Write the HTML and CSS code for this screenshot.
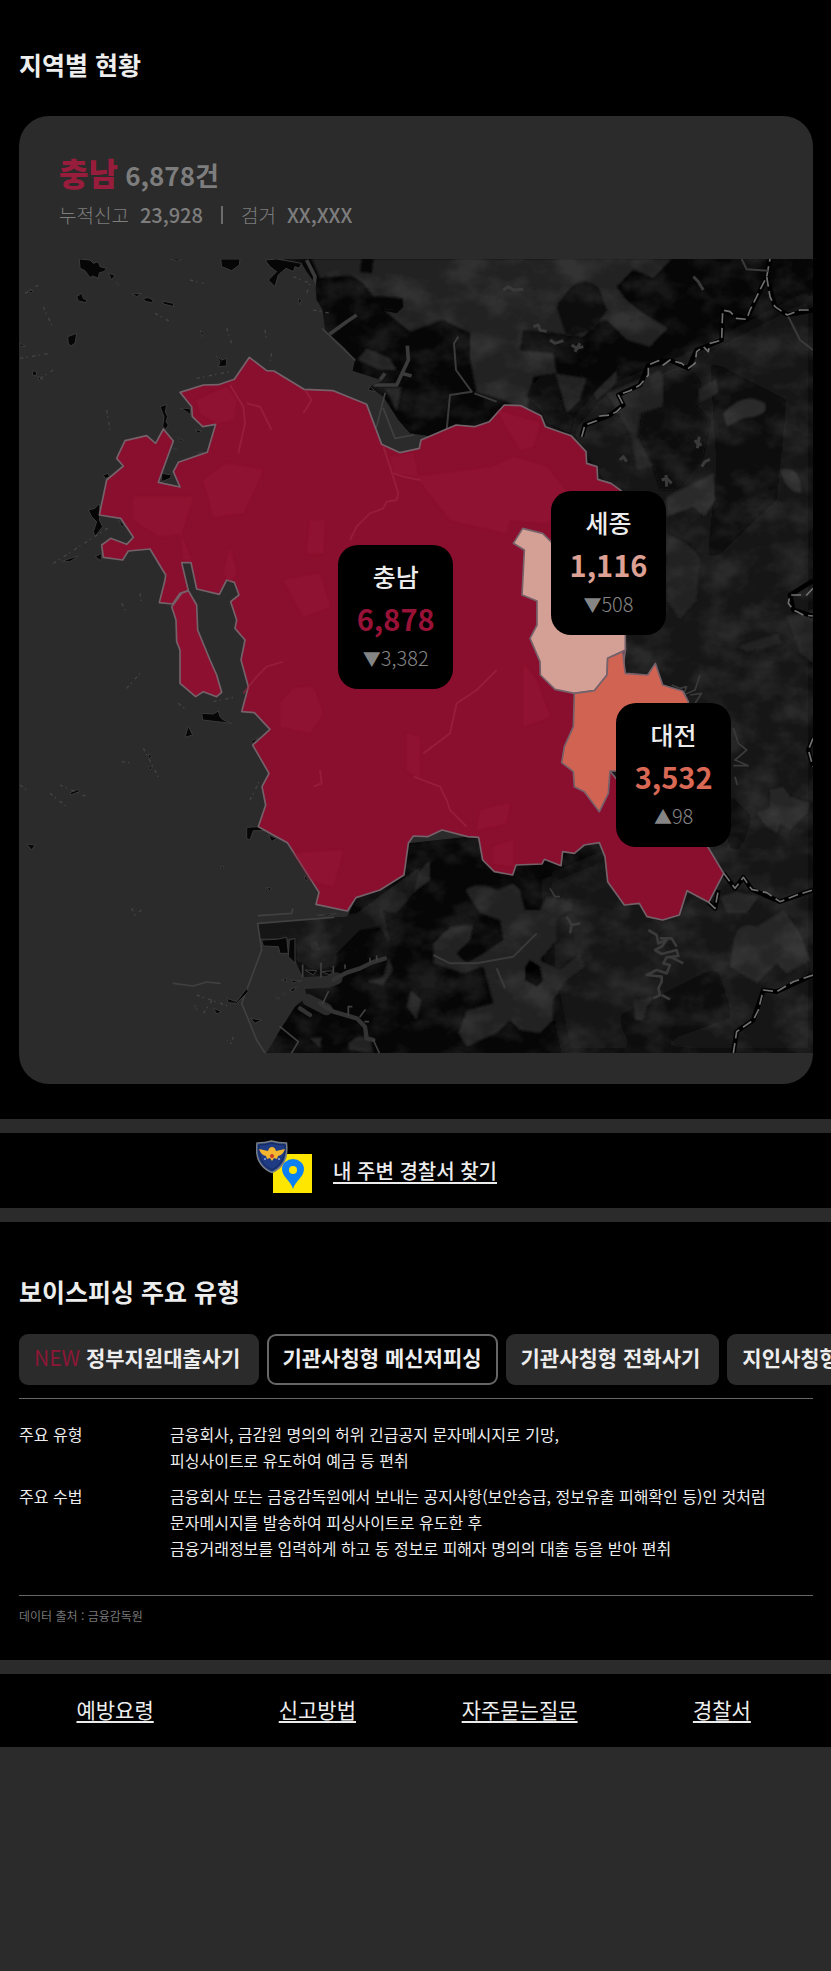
FILE: index.html
```html
<!DOCTYPE html>
<html lang="ko">
<head>
<meta charset="utf-8">
<meta name="viewport" content="width=device-width, initial-scale=1">
<title>지역별 현황</title>
<link rel="stylesheet" href="styles.css">
</head>
<body>
<main>
  <section class="region">
    <h2 class="heading">지역별 현황</h2>
    <article class="card">
      <header class="card-head">
        <p class="card-total"><strong class="card-name">충남</strong> 6,878건</p>
        <p class="card-sub"><span>누적신고</span><b>23,928</b><i class="bar"></i><span>검거</span><b>XX,XXX</b></p>
      </header>
      <div class="map">
        <svg class="map-art" viewBox="57 777 2382 2382" role="img" aria-label="충청권 지도">
          <defs>
            <filter id="soft" x="-10%" y="-10%" width="120%" height="120%"><feGaussianBlur stdDeviation="3"/></filter>
            <filter id="haze" x="-20%" y="-20%" width="140%" height="140%"><feGaussianBlur stdDeviation="22"/></filter>
            <filter id="grain" x="0" y="0" width="100%" height="100%">
              <feTurbulence type="fractalNoise" baseFrequency="0.009 0.012" numOctaves="4" seed="8"/>
              <feColorMatrix values="0 0 0 0 0.17  0 0 0 0 0.17  0 0 0 0 0.17  2.6 0 0 0 -1.05"/>
            </filter>
            <clipPath id="land">
              <path d="M795 777H850L880 800 905 790 920 815 945 850 950 900 968 930 975 990 1035 1045 1065 1080 1058 1112 1150 1142 1108 1160 1150 1190 1195 1260 1230 1300 1300 1310 1500 1300 1500 2500 1225 2530 1212 2625 1140 2670 1068 2693 1042 2750 980 2755 775 2770 780 2815 885 2815 885 2880 910 2935 920 2990 885 3020 840 3090 800 3159H2439V777Z"/>
            </clipPath>
          </defs>
          <g clip-path="url(#land)">
            <rect x="57" y="777" width="2382" height="2382" fill="#060606"/>
            <g filter="url(#haze)" fill="#171717">
              <path d="M1800 1180 2050 1080 2439 880V3159H1700L1650 2900 1640 2640 1830 2560 1840 1500 1700 1300Z"/>
              <path fill="#0b0b0b" d="M2130 1080 2360 1200 2330 1500 2120 1700 2150 1400ZM2150 2350 2260 2450 2200 2600ZM1850 3050 2150 2900 2200 3050 1900 3159Z"/>
            </g>
            <g filter="url(#soft)" fill="#202020">
              <path d="M935 777H1085L1080 815 1115 820 1120 777H2015L1960 835 1900 810 1850 860 1880 900 1930 940 2005 985 1950 1040 1880 1020 1820 960 1790 970 1750 1010 1670 1000 1570 990 1560 1050 1660 1060 1670 1120 1600 1130 1580 1230 1480 1190 1430 1180 1410 1080 1410 1000 1330 960 1230 995 1150 930 1200 930 1210 895 1150 890 1120 890 1090 850 1050 825 960 835Z"/>
              <path d="M1070 1080 1100 1045 1170 1075 1190 1110 1140 1110ZM1155 1165 1205 1160 1190 1235Z"/>
              <path fill="#0b0b0b" d="M1670 920Q1740 800 1800 870L1820 930 1780 990 1700 1010Z"/>
              <path d="M1665 1120 1760 1135 1740 1200 1700 1240ZM1820 1180 1980 1110 2000 1160 1985 1220 1920 1240 1910 1310 1960 1400 1910 1410 1890 1300ZM2090 1170 2150 1135 2155 1180 2100 1210ZM1780 1180 1850 1110 1850 1150 1790 1200Z"/>
              <path fill="#080808" d="M1990 1130Q2080 1090 2100 1150L2090 1220 2130 1260 2110 1370 2030 1470 1980 1470 1960 1400 1915 1300 1930 1240 1990 1220ZM1580 1190Q1600 1120 1665 1125L1690 1230 1720 1250 1710 1300 1640 1270 1620 1230Z"/>
              <path fill="#292929" d="M2170 1240Q2230 1170 2295 1210 2310 1250 2230 1255L2180 1280ZM2340 1410Q2400 1390 2405 1480 2360 1480 2340 1410ZM2000 1490 2140 1420 2145 1500 2115 1550 2080 1520 2000 1550Z"/>
              <path d="M2000 1600 2060 1630 2100 1670 2090 1800 2040 1860 2000 1800ZM2210 1940 2330 1900 2350 1930 2240 1955ZM2360 1850 2439 1830V1990L2400 1960Z"/>
              <path fill="#272727" d="M2270 2440 2310 2420 2310 2370 2350 2360 2370 2390 2430 2410 2420 2440 2370 2490 2340 2470 2330 2500 2300 2480ZM2160 2690 2210 2675 2275 2690 2240 2740 2180 2740ZM2200 2830Q2210 2760 2270 2780L2350 2730 2400 2800 2430 2880 2360 2920 2330 2890 2270 2950 2190 2900Z"/>
              <path d="M1395 2670Q1440 2640 1490 2670L1540 2650 1560 2670 1575 2730 1620 2730 1640 2690 1720 2700 1715 2730 1670 2750 1670 2820 1620 2880 1680 2910 1740 2860 1755 2900 1700 2940 1660 3000 1660 3060 1620 3100 1560 3090 1530 3060 1490 3100 1400 3140 1375 3100 1400 3030 1480 3010 1450 2900 1390 2920 1300 2890 1300 2830 1350 2780 1420 2775 1410 2820 1370 2860 1400 2890 1450 2860 1510 2820 1500 2760 1440 2740Z"/>
              <path fill="#060606" d="M1575 2900 1590 2880 1620 2900 1630 2940 1610 2960 1575 2940Z"/>
              <path d="M1900 3000 1965 2990 1940 3020 1930 3060 1905 3060ZM1233 2640 1290 2580 1290 2640 1240 2680ZM1233 2970 1265 3000 1250 3060 1220 3020Z"/>
              <path fill="#191919" d="M775 2770 1000 2750 1070 2740 1260 2600 1240 2680 1190 2740 1150 2730 1170 2830 1140 2780 1080 2790 1010 2860 1010 2900 940 2910 890 2880 885 2815 780 2815Z"/>
              <path d="M930 2830 950 2820 960 2850 935 2850ZM1100 2945 1150 2930 1165 2870 1180 2910 1150 2955ZM930 3115 965 3110 960 3145ZM1045 3130 1070 3110 1110 3110 1120 3159 1045 3150ZM1230 2980 1250 2980 1250 3050 1220 3020Z"/>
            </g>
            <rect x="57" y="777" width="2382" height="2382" filter="url(#grain)" opacity=".22"/>
            <g fill="none" stroke="#000" stroke-width="14" stroke-linejoin="round">
              <path d="M1745 1310 1755 1275 1830 1245 1870 1215 1855 1185 1920 1155 1945 1095 2010 1080 2065 1105 2090 1050 2165 1020 2168 930 2240 958 2300 830 2310 777M2300 830 2325 920 2362 945 2439 930M2439 1742 2370 1785 2380 1830 2439 1848M2171 2620 2205 2665 2230 2632 2255 2668 2340 2705 2439 2670M2126 2707 2145 2725 2155 2670M2439 2925 2330 2975 2290 2970 2260 3060 2210 3095 2200 3159M2439 2215 2425 2250 2439 2300"/>
            </g>
            <g fill="none" stroke="#707070" stroke-width="5" stroke-dasharray="30 14" stroke-linejoin="round">
              <path d="M1745 1310 1755 1275 1790 1262 1800 1248 1830 1245 1850 1235 1870 1215 1855 1185 1890 1172 1920 1155 1945 1125 1945 1095 1975 1082 1990 1095 2010 1080 2045 1090 2065 1105 2085 1090 2090 1055 2110 1040 2125 1055 2130 1030 2165 1020 2168 930 2190 935 2210 955 2240 958 2250 930 2300 830 2310 777M2300 830 2310 890 2325 920 2362 945 2400 930 2439 930M2439 1765 2420 1785 2370 1785 2365 1810 2380 1830 2410 1845 2439 1848M2171 2620 2205 2665 2230 2632 2255 2668 2300 2678 2340 2705 2390 2685 2439 2670M2126 2707 2145 2725 2155 2670M2439 2925 2380 2945 2330 2975 2290 2970 2275 3030 2260 3060 2210 3095 2200 3159M2439 2215 2425 2250 2439 2300"/>
            </g>
            <g fill="none" stroke="#3a3a3a" stroke-width="6" stroke-linejoin="round">
              <path stroke-width="11" d="M920 780 945 830 940 870M1070 945 1040 965 985 1005M1222 1037 1225 1080 1190 1155 1120 1155M1205 1120 1235 1128M1155 1120 1140 1140"/>
              <path d="M1375 1010 1362 1030 1368 1110 1415 1175 1350 1185 1340 1290M1423 1180 1490 1205M2365 950 2400 1020 2439 1050M2225 777 2240 808 2305 812"/>
              <path d="M1300 2865 1350 2890 1430 2890 1540 2870 1610 2800M1490 2905 1515 2965"/>
              <path stroke-width="8" d="M1945 2790 1970 2805 1975 2830 2000 2820 1985 2840 1965 2850 1985 2862 2030 2850 2035 2868 2000 2872 1990 2890 2010 2895 2000 2920 1970 2910 1940 2925 1985 2930 1985 2945 1975 2965 1980 2985 1960 2995M1985 2985 2010 2998M1980 2815 2015 2815 2030 2840M2010 2870 2050 2890M1700 2750 1715 2775 1740 2770M1715 2775 1710 2800"/>
              <path stroke-width="5" d="M2015 2055 2040 2065 2060 2060 2050 2085 2085 2070 2100 2025M2070 2085 2105 2080 2085 2110M2200 2185 2215 2230 2240 2250 2205 2280 2245 2297 2200 2297M2205 2330 2212 2355M1650 2665 1665 2690 1680 2690"/>
              <path stroke-width="9" d="M1510 870 1525 860 1540 870 1570 868M1600 980 1615 975 1620 990 1640 995M1650 1020 1665 1030 1690 1022M1715 1035 1730 1045 1750 1040M1725 1055 1740 1030M2080 830 2095 845 2110 870M2085 1320 2095 1335 2105 1332M2092 1345 2098 1310M1860 1380 1870 1370 1880 1385M2105 1400 2115 1385 2130 1378M1985 1440 2000 1435 2015 1450M1998 1425 2000 1460"/>
            </g>
            <path fill="#060606" d="M1140 930 1180 930 1205 895 1210 920 1190 940Z"/>
          </g>
          <!-- estuary, river channels and sea walls -->
          <g fill="none" stroke="#2b2b2b" stroke-linejoin="round" stroke-linecap="round">
            <path stroke-width="36" d="M905 2950 985 2945 1010 2935M925 3000 980 3028"/>
            <path stroke-width="13" stroke="#333" d="M1000 2940 1040 2918 1080 2905 1115 2888 1155 2875M960 3010 1000 3035 1070 3055 1095 3080 1100 3115 1120 3120M900 3025 930 3045"/>
            <path stroke="#404040" stroke-width="5" d="M775 2747 875 2740 878 2727M775 2770 1000 2752M773 2770 785 2850 725 3010 770 3120 795 3159M908 2930V2895M963 2930V2890M1000 2920V2900M1035 2905V2895M1110 2885V2875M1130 2880V2868M985 2975 968 3010M840 3080 895 3125 875 3159M1120 3120 1138 3159M1045 3045V3020H1055M1080 3050 1095 3030M1095 3065H1105M968 987 1065 1080M1155 1180 1130 1280M1150 1225 1185 1315 1240 1305M520 2950 580 2958 620 2946 660 2950"/>
          </g>
          <!-- islets -->
          <g fill="#060606" stroke="#3a3a3a" stroke-width="3">
            <path d="M238 777 270 780 280 790 295 785 300 800 320 805 312 815 298 818 295 835 278 828 270 833 255 812 240 805ZM325 820 345 825 335 840ZM350 845 357 855 350 855ZM230 890 245 880 250 895 260 900 258 908 235 903ZM395 882 425 880 410 890ZM430 895 445 893 460 900 455 908 435 904ZM488 903 520 910 522 920 490 912ZM203 1010 230 1000 225 1030 212 1038 205 1030ZM600 990 610 1000 607 1010ZM662 777H720L718 795 695 812 665 800ZM510 777H545L530 783ZM648 1068 665 1080 680 1075 680 1098 655 1100 660 1085ZM98 1112 110 1115 108 1128 98 1125ZM115 1130 130 1138 115 1140ZM60 1030 78 1040 60 1038ZM85 870 100 872 92 880Z"/>
            <path d="M480 1220 500 1213 496 1235 503 1250 498 1265 505 1275 498 1288 488 1280 492 1250ZM540 1225 570 1225 572 1245 560 1235ZM585 1290 605 1292 595 1300ZM535 1315 550 1320 542 1325ZM520 1345 530 1345 527 1350ZM485 1420 515 1425 510 1435 485 1445ZM310 1425 325 1420 328 1432 315 1435ZM265 1530 285 1525 298 1510 300 1545 298 1560 308 1580 285 1610 280 1595 290 1565 275 1550ZM355 1560 372 1575 365 1580ZM185 1685 210 1675 235 1668 210 1685ZM285 1670 305 1660 303 1682ZM575 1360 610 1357 580 1365Z"/>
            <path d="M605 2140 640 2142 655 2133 660 2150 670 2160 695 2170 650 2165 608 2160ZM565 2178 578 2205 555 2212ZM445 2262 455 2268 448 2278ZM445 2300 458 2302 450 2310ZM210 2378 235 2368 238 2375 212 2385ZM80 2532 105 2535 95 2550ZM660 2598 672 2600 668 2607ZM800 2662 815 2665 808 2672ZM740 2482 775 2480 800 2492 760 2492 750 2520 740 2515ZM805 2505 830 2515 815 2525ZM912 2625 925 2640 915 2640ZM950 2745 1010 2740 980 2748ZM752 2225 775 2212 760 2230Z"/>
            <path d="M680 2995 710 3005 740 2965 745 2975 710 3010 685 3008ZM585 3015 592 3030 585 3025ZM640 3025 665 3035 650 3042ZM680 3120 692 3125 685 3130ZM752 3055 785 3060 765 3070ZM785 2820 830 2818 860 2812 865 2860 840 2860 835 2840 790 2838ZM868 2820 885 2815 885 2890 865 2870ZM845 2940 860 2935 860 2945ZM872 2940 905 2943 880 2948ZM868 2970 890 2960 880 2975ZM848 2980 858 2980 852 2988ZM828 2992 840 2995 830 2998ZM915 2910 950 2912 940 2925ZM965 2915 1000 2912 990 2925Z"/>
            <path d="M795 780 830 777 905 790 898 805 885 800 880 815 858 805 835 825 825 860 805 840 830 815 810 800ZM895 895 905 900 898 915ZM1110 1158 1125 1175 1105 1170Z"/>
          </g>
          <g fill="none" stroke="#444" stroke-width="4" stroke-dasharray="10 9 4 14">
            <path d="M75 880 115 855M130 920 155 975M60 1075 150 1060M120 1135 160 1110M570 840 610 850M465 940 510 965M680 985 695 1030M795 990 800 1025M815 1060 810 1085M590 1135 690 1115M320 1230 330 1290M160 1690 330 1580M365 1810 380 1840M420 1780 425 1810M380 2065 420 2020M535 2110 560 2130M640 2105 710 2090M365 2285 400 2290M430 2245 480 2340M60 2355 80 2370M150 2380 200 2420M180 2355 260 2390M395 2725 405 2745 425 2730M590 2985 690 3020M610 3040 640 2995M700 3110 690 3140M750 2400 780 2340M880 830 930 850 920 880M940 930 990 940"/>
          </g>
          <g stroke="#75616a" stroke-width="5" stroke-linejoin="round">
            <path fill="#8a0e2d" d="M540 1177 610 1155 655 1154 703 1138 748 1072 800 1112 822 1113 912 1168 1000 1172 1100 1213 1145 1333 1200 1358 1258 1345 1263 1320 1368 1275 1423 1280 1468 1265 1513 1215 1563 1217 1623 1247 1636 1280 1713 1307 1758 1355 1760 1390 1791 1400 1793 1438 1833 1450 1863 1472 1876 1950 1830 2313 1900 2400 2123 2540 2171 2620 2126 2707 2061 2672 2038 2745 1988 2760 1941 2750 1918 2710 1873 2715 1823 2645 1815 2570 1798 2528 1753 2535 1723 2560 1688 2555 1683 2597 1633 2578 1626 2592 1548 2595 1538 2625 1483 2615 1448 2580 1436 2512 1403 2510 1326 2490 1283 2510 1240 2508 1225 2530 1212 2625 1140 2670 1068 2693 1042 2733 948 2713 957 2677 862 2528 775 2480 797 2415 786 2360 807 2320 758 2235 810 2188 763 2138 725 2135 745 2060 723 1980 735 1920 705 1885 710 1860 692 1805 717 1785 703 1747 680 1740 658 1783 590 1767 573 1688 545 1688 565 1772 540 1780 518 1812 478 1808 495 1740 497 1725 450 1647 385 1653 368 1680 310 1672 305 1635 332 1615 380 1633 400 1612 362 1555 298 1545 320 1440 370 1398 350 1375 375 1322 440 1307 467 1330 490 1287 520 1323 475 1447 540 1461 520 1415 535 1387 622 1357 647 1273 608 1280 577 1250 575 1220Z"/>
            <path fill="#8e1030" d="M565 1772 590 1815 593 1890 630 1980 650 2025 665 2077 650 2090 610 2075 587 2090 540 2050 540 1950 530 1925 528 1860 515 1820 545 1780Z"/>
            <path fill="#d49f94" d="M1568 1585 1628 1600 1653 1625 1800 1700 1876 1905V1950L1823 1975 1821 2025 1783 2072 1723 2080 1665 2068 1621 2025 1620 1985 1590 1915 1611 1875V1803L1566 1785 1573 1650 1540 1630Z"/>
            <path fill="#d16353" d="M1823 1975 1868 1955 1876 2020 1943 2025 1966 1990 1988 2055 2048 2073 2065 2105 2000 2313H1830L1825 2380 1798 2435 1753 2375 1723 2360 1720 2315 1685 2288 1693 2240 1720 2180 1723 2080 1783 2072 1821 2025Z"/>
          </g>
          <!-- relief inside the highlighted province -->
          <g fill="#961838" opacity=".5" filter="url(#soft)">
            <path d="M590 1200 680 1160 710 1200 700 1260 650 1270 600 1240ZM400 1490 580 1490 545 1600 480 1610 400 1560ZM610 1440 680 1390 790 1410 730 1540 640 1550ZM670 1720 690 1640 710 1720 690 1745ZM540 1590 575 1680 550 1680ZM930 1560 975 1560 970 1660 920 1660ZM850 1740 960 1720 990 1820 910 1850ZM1170 1370 1240 1360 1255 1430 1180 1420ZM1490 1230 1620 1270 1600 1340 1560 1350ZM1250 1430 1480 1400 1540 1370 1640 1400 1720 1500 1640 1570 1530 1560 1520 1600 1350 1560ZM840 2110 880 2065 940 2060 970 2140 930 2200 840 2180ZM880 2560 1030 2550 1000 2660 930 2640ZM1220 2200 1260 2210 1260 2340 1220 2310ZM1440 2430 1530 2410 1520 2470 1430 2490ZM1480 2540 1540 2520 1540 2600 1480 2590ZM1570 1990 1610 2040 1650 2150 1570 2180Z"/>
          </g>
          <g fill="none" stroke="#9c2744" stroke-width="6" opacity=".6" stroke-linejoin="round">
            <path d="M690 1155 730 1220 735 1270 715 1360M740 1210 780 1220 815 1290M915 1170 935 1200 910 1240M1150 1340 1170 1400 1195 1480 1190 1500 1160 1505 1150 1525 1110 1540 1070 1580 1050 1620M1180 1420 1210 1430 1260 1440M730 2080 770 2030 800 2000 850 1985M1490 2010 1430 2070 1370 2110 1350 2200 1270 2260M1240 2330 1320 2360 1340 2400 1350 2430 1400 2480M960 2310 965 2350 940 2360"/>
          </g>
        </svg>
        <div class="pin pin-chungnam"><h3>충남</h3><strong>6,878</strong><small><i class="tri down">▼</i>3,382</small></div>
        <div class="pin pin-sejong"><h3>세종</h3><strong>1,116</strong><small><i class="tri down">▼</i>508</small></div>
        <div class="pin pin-daejeon"><h3>대전</h3><strong>3,532</strong><small><i class="tri up">▲</i>98</small></div>
      </div>
    </article>
  </section>

  <div class="find">
    <svg class="find-icon" viewBox="0 0 56 54" aria-hidden="true">
      <rect x="17" y="14" width="39" height="39" fill="#ffe600"/>
      <path d="M37 49C35 41 26 37 26 29a11 10 0 0 1 22 0c0 8-9 12-11 20Z" fill="#0b80f5"/>
      <circle cx="37" cy="30" r="4" fill="#ffe600"/>
      <path d="M1 3Q9 3 15.500 1 22 3 30.500 3 33 25 16 32.500-2 25 1 3Z" fill="#1f3b83" stroke="#777d83" stroke-width="1.500"/>
      <path d="M3 5Q10 5 15.500 3 21 5 29 5 30 23 16 30 1 23 3 5Z" fill="none" stroke="#15275c"/>
      <path d="M3 9 12 11Q13 7 16 7 19 7 20 11L29 9Q27 15 22 16L21 19 18 18 16 21 14 18 11 19 10 16Q5 15 3 9Z" fill="#f3b62f"/>
      <circle cx="16" cy="16" r="2" fill="#c4382b"/>
      <circle cx="9" cy="19" r="1" fill="#8ea9e8"/><circle cx="23" cy="19" r="1" fill="#8ea9e8"/>
    </svg>
    <a class="find-link" href="#police">내 주변 경찰서 찾기</a>
  </div>

  <section class="types">
    <h2 class="heading">보이스피싱 주요 유형</h2>
    <div class="tabs">
      <button class="tab" type="button"><span class="new">NEW</span> 정부지원대출사기</button>
      <button class="tab active" type="button">기관사칭형 메신저피싱</button>
      <button class="tab" type="button">기관사칭형 전화사기</button>
      <button class="tab" type="button">지인사칭형</button>
    </div>
    <dl class="detail">
      <dt>주요 유형</dt>
      <dd>금융회사, 금감원 명의의 허위 긴급공지 문자메시지로 기망,<br>피싱사이트로 유도하여 예금 등 편취</dd>
      <dt>주요 수법</dt>
      <dd>금융회사 또는 금융감독원에서 보내는 공지사항(보안승급, 정보유출 피해확인 등)인 것처럼<br>문자메시지를 발송하여 피싱사이트로 유도한 후<br>금융거래정보를 입력하게 하고 동 정보로 피해자 명의의 대출 등을 받아 편취</dd>
    </dl>
    <p class="source">데이터 출처 : 금융감독원</p>
  </section>
</main>
<nav class="links">
  <a href="#prevent">예방요령</a>
  <a href="#report">신고방법</a>
  <a href="#faq">자주묻는질문</a>
  <a href="#police">경찰서</a>
</nav>
</body>
</html>
```

FILE: styles.css
```css
* { box-sizing: border-box; }

body {
  margin: 0;
  background: #2b2b2b;
  color: #ededed;
  font-family: "Noto Sans CJK KR", "Noto Sans", sans-serif;
  font-size: 16px;
}

h2, h3, p, dl, dd { margin: 0; }
i { font-style: normal; }

.region {
  padding: 45px 18px 35px 19px;
  background: #000;
}

.heading {
  font-size: 25px;
  font-weight: 700;
  line-height: 38px;
}

.card {
  margin-top: 33px;
  padding-bottom: 31px;
  border-radius: 30px;
  background: #2b2b2b;
}

.card-head {
  padding: 36px 40px 27px;
  color: #7d7d7d;
}

.card-total {
  font-size: 26px;
  font-weight: 700;
  line-height: 46px;
}

.card-name {
  color: #981c3c;
  font-size: 32px;
  font-weight: 900;
  line-height: 1;
}

.card-sub {
  display: flex;
  align-items: center;
  font-size: 19px;
  font-weight: 300;
  line-height: 34px;
}

.card-sub b {
  margin-left: 11px;
  font-size: 20px;
  font-weight: 500;
}

.bar {
  width: 2px;
  height: 18px;
  margin: 0 18px;
  background: #6c6c6c;
}

.map { position: relative; }

.map-art {
  display: block;
  width: 100%;
  height: auto;
}

.pin {
  position: absolute;
  display: flex;
  flex-direction: column;
  align-items: center;
  width: 115px;
  padding: 12px 0 15px;
  border-radius: 20px;
  background: #000;
}

.pin h3 {
  font-size: 25px;
  font-weight: 500;
  line-height: 38px;
}

.pin strong {
  font-size: 29px;
  font-weight: 700;
  line-height: 47px;
}

.pin small {
  color: #858585;
  font-size: 20px;
  font-weight: 300;
  line-height: 32px;
}

.tri { font-size: 18px; }

.pin-chungnam { left: 40.2%; top: 36%; }
.pin-chungnam strong { color: #981238; }
.pin-sejong { left: 67%; top: 29.2%; }
.pin-sejong strong { color: #dda095; }
.pin-daejeon { left: 75.2%; top: 55.9%; }
.pin-daejeon strong { color: #d96855; }

.find {
  display: flex;
  align-items: center;
  justify-content: center;
  gap: 21px;
  height: 75px;
  margin: 14px 0;
  padding-right: 78px;
  background: #000;
}

.find-icon {
  width: 56px;
  height: 54px;
  margin-bottom: 8px;
}

.find-link {
  color: inherit;
  font-size: 20px;
  font-weight: 500;
  text-underline-offset: 3px;
}

.types {
  padding: 50px 18px 31px 19px;
  background: #000;
}

.tabs {
  display: flex;
  gap: 8px;
  margin-top: 24px;
  margin-right: -18px;
  padding-bottom: 13px;
  overflow-x: auto;
  scrollbar-width: none;
}

.tab {
  flex: none;
  height: 51px;
  padding: 0 19px 6px 15px;
  border: 0;
  border-radius: 9px;
  background: #2b2b2b;
  color: inherit;
  font: 700 21px/30px "Noto Sans CJK KR", "Noto Sans", sans-serif;
}

.tab.active {
  padding: 0 14px 6px 13px;
  border: 2px solid #666;
  background: #000;
}

.new {
  color: #8c1736;
  font-weight: 400;
}

.detail {
  display: grid;
  grid-template-columns: 151px 1fr;
  row-gap: 10px;
  padding: 22px 0 34px;
  border-top: 1px solid #666;
  border-bottom: 1px solid #666;
  line-height: 26px;
}

.source {
  margin-top: 9px;
  padding-bottom: 2px;
  color: #777;
  font-size: 12px;
  line-height: 22px;
}

.links {
  display: grid;
  grid-template-columns: repeat(4, 1fr);
  align-items: center;
  justify-items: center;
  height: 73px;
  margin-top: 14px;
  padding: 0 8px 4px 14px;
  background: #000;
}

.links a {
  color: inherit;
  font-size: 21px;
  text-underline-offset: 3px;
}
```
